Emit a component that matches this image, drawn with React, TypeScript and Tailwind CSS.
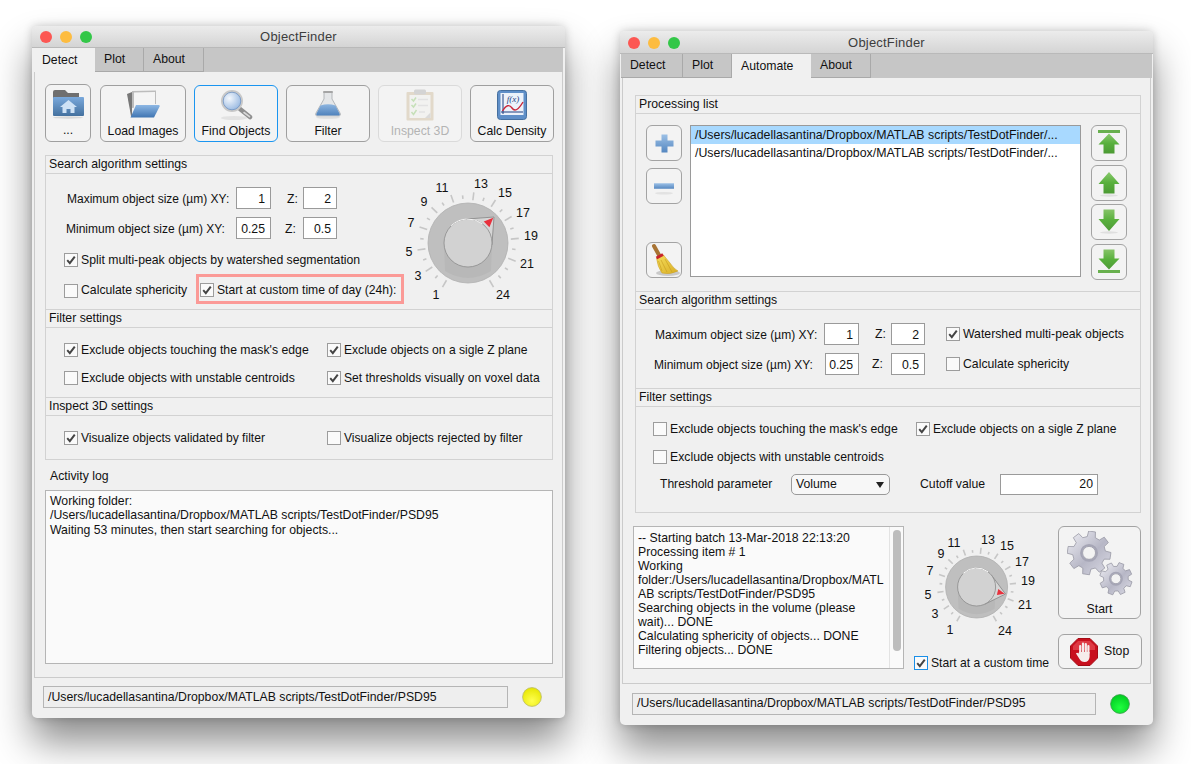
import React from "react";

const PATH = "/Users/lucadellasantina/Dropbox/MATLAB scripts/TestDotFinder/PSD95";

function Tick() {
  return (
    <svg viewBox="0 0 14 14" className="block h-full w-full">
      <path d="M2.6 7.2 L5.6 10.6 L11.4 3" fill="none" stroke="#444" strokeWidth="2.3" />
    </svg>
  );
}

function Check({ on, label, blue }: { on?: boolean; label: string; blue?: boolean }) {
  return (
    <div className="flex items-center whitespace-nowrap">
      <div className={blue ? "h-[14px] w-[14px] shrink-0 border border-[#1a8fe8] bg-[#fafafa]" : "h-[14px] w-[14px] shrink-0 border border-[#9c9c9c] bg-[#fafafa]"}>
        {on ? <Tick /> : null}
      </div>
      <span className="ml-[3px]">{label}</span>
    </div>
  );
}

function Field({ value, cls }: { value: string; cls: string }) {
  return <div className={"flex h-[22px] shrink-0 items-center justify-end border border-[#9a9a9a] bg-white pr-[5px] pt-[2px] " + cls}>{value}</div>;
}

function Section({ title, cls, low, children }: { title: string; cls: string; low?: boolean; children: React.ReactNode }) {
  return (
    <div className={"border border-[#d2d2d2] " + cls}>
      <div className={(low ? "" : "pb-[1px] ") + "flex h-[18px] items-center border-b border-[#d2d2d2] pl-[3px]"}>{title}</div>
      {children}
    </div>
  );
}

function TitleBar({ cls, dots }: { cls: string; dots: string }) {
  return (
    <div className={"relative flex items-center rounded-t-[5px] border-b border-[#b9b9b9] bg-gradient-to-b from-[#ececec] to-[#d4d4d4] " + cls}>
      <div className={"flex " + dots}>
        <div className="h-[12px] w-[12px] rounded-full bg-[#fc5753]" />
        <div className="ml-[8px] h-[12px] w-[12px] rounded-full bg-[#fdbc40]" />
        <div className="ml-[8px] h-[12px] w-[12px] rounded-full bg-[#33c748]" />
      </div>
      <div className="absolute inset-x-0 text-center text-[13px] tracking-[0.2px] text-[#3d3d3d]">ObjectFinder</div>
    </div>
  );
}

function Tab({ label, active, cls }: { label: string; active?: boolean; cls: string }) {
  return (
    <div className={(active ? "bg-[#f0f0f0] " : "border-b border-r border-[#a9a9a9] ") + "flex h-[24px] items-center " + cls}>{label}</div>
  );
}

function polar(cx: number, cy: number, r: number, deg: number) {
  const a = ((deg - 90) * Math.PI) / 180;
  return [cx + r * Math.cos(a), cy + r * Math.sin(a)];
}

function Knob(props: {
  id: string;
  viewBox: string;
  cls: string;
  cx: number;
  cy: number;
  R: number;
  r: number;
  tip: [number, number];
  font: number;
  labels: [string, number, number][];
}) {
  const { id, cx, cy, R, r, tip } = props;
  const k = R / 40;
  const ticks = [];
  for (let i = 0; i < 24; i++) {
    const v = i + 1;
    const long = (v % 2 === 1 && v <= 21) || v === 24;
    const deg = 210 + (i * 300) / 23;
    const a = polar(cx, cy, R + (long ? 3 : 4.5) * k, deg);
    const b = polar(cx, cy, R + (long ? 11 : 8) * k, deg);
    ticks.push(<line key={i} x1={a[0]} y1={a[1]} x2={b[0]} y2={b[1]} stroke="#c6c6c6" strokeWidth="1.6" />);
  }
  const dx = tip[0] - cx;
  const dy = tip[1] - cy;
  const d = Math.hypot(dx, dy);
  const base = Math.atan2(dy, dx);
  const off = Math.acos(r / d);
  const t1 = [cx + r * Math.cos(base + off), cy + r * Math.sin(base + off)];
  const t2 = [cx + r * Math.cos(base - off), cy + r * Math.sin(base - off)];
  const ux = dx / d;
  const uy = dy / d;
  const rl = 10.5 * k;
  const rw = 4 * k;
  const rb = [tip[0] - ux * rl, tip[1] - uy * rl];
  const red = `${tip[0] - ux},${tip[1] - uy} ${rb[0] - uy * rw},${rb[1] + ux * rw} ${rb[0] + uy * rw},${rb[1] - ux * rw}`;
  return (
    <svg viewBox={props.viewBox} className={"block shrink-0 " + props.cls}>
      <defs>
        <clipPath id={id}>
          <circle cx={cx} cy={cy} r={R} />
        </clipPath>
      </defs>
      {ticks}
      <circle cx={cx} cy={cy} r={R} fill="#bfbfbf" stroke="#b0b0b0" strokeWidth="0.8" />
      <path d={`M${cx - r} ${cy} L${cx - r + 1} ${cy + R * 0.7} Q${cx} ${cy + R * 1.05} ${cx + r - 1} ${cy + R * 0.7} L${cx + r} ${cy} Z`} fill="#b8b8b8" clipPath={`url(#${id})`} />
      <polygon points={`${tip[0]},${tip[1]} ${t1[0]},${t1[1]} ${t2[0]},${t2[1]}`} fill="#d6d6d6" stroke="#858585" strokeWidth="0.8" />
      <circle cx={cx} cy={cy} r={r} fill="#d2d2d2" stroke="#8c8c8c" strokeWidth="0.8" />
      <path d={`M${cx - r * 0.7} ${cy - r * 0.72} A${r} ${r} 0 0 1 ${cx + r * 0.6} ${cy - r * 0.8}`} fill="none" stroke="#f6f6f6" strokeWidth="1" />
      <polygon points={red} fill="#e8303c" />
      {props.labels.map(([t, x, y]) => (
        <text key={t} x={x} y={y} textAnchor="middle" dominantBaseline="central" fontSize={props.font} fill="#111" fontFamily="Liberation Sans, Arial, sans-serif">
          {t}
        </text>
      ))}
    </svg>
  );
}

function FolderHome() {
  return (
    <svg viewBox="0 0 32 30" className="h-[30px] w-[32px]">
      <defs>
        <linearGradient id="fh" x1="0" x2="0" y1="0" y2="1">
          <stop offset="0" stopColor="#7aa9dc" />
          <stop offset="1" stopColor="#44719f" />
        </linearGradient>
      </defs>
      <path d="M1 3 Q1 1 3 1 H13 L16 4 H27 V10 H1 Z" fill="#6f6f6f" />
      <rect x="1" y="8" width="31" height="19" rx="1" fill="url(#fh)" />
      <path d="M16.5 11 L25 18 H22.5 V24 H18.5 V20 H14.5 V24 H10.5 V18 H8 Z" fill="#cfe2f5" />
      <ellipse cx="16" cy="28.5" rx="15" ry="1.2" fill="#d8d8d8" />
    </svg>
  );
}

function OpenFolder() {
  return (
    <svg viewBox="0 0 34 30" className="h-[30px] w-[34px]">
      <defs>
        <linearGradient id="ofb" x1="0" x2="0" y1="0" y2="1">
          <stop offset="0" stopColor="#8db7e4" />
          <stop offset="1" stopColor="#3f75b2" />
        </linearGradient>
      </defs>
      <path d="M1 4 L6 2 V26 H5 Z" fill="#777" />
      <path d="M6 1 L30 0.5 V14 L6 18 Z" fill="#bcbcbc" />
      <path d="M8 2.5 L29 2 V15 L8 18 Z" fill="#f4f4f4" />
      <path d="M10 15 H33 Q34 15 33.6 16.5 L28 27.5 H4.5 Z" fill="url(#ofb)" />
    </svg>
  );
}

function Magnifier() {
  return (
    <svg viewBox="0 0 34 32" className="h-[32px] w-[34px]">
      <defs>
        <radialGradient id="mg" cx="0.35" cy="0.35" r="0.8">
          <stop offset="0" stopColor="#f4f8fd" />
          <stop offset="1" stopColor="#8fb2de" />
        </radialGradient>
      </defs>
      <ellipse cx="15" cy="29" rx="13" ry="2" fill="#e2e2e2" />
      <line x1="21" y1="20" x2="31" y2="28" stroke="#8f8f8f" strokeWidth="4.5" strokeLinecap="round" />
      <line x1="25" y1="23.5" x2="30.5" y2="27.7" stroke="#d9d9d9" strokeWidth="1.6" strokeLinecap="round" />
      <circle cx="13" cy="12" r="11" fill="#c8c8c8" />
      <circle cx="13" cy="12" r="8.8" fill="url(#mg)" stroke="#6f93c4" strokeWidth="0.8" />
    </svg>
  );
}

function Flask() {
  return (
    <svg viewBox="0 0 28 29" className="h-[29px] w-[28px]">
      <defs>
        <linearGradient id="fl" x1="0" x2="0" y1="0" y2="1">
          <stop offset="0" stopColor="#8db5e0" />
          <stop offset="1" stopColor="#4f82bc" />
        </linearGradient>
      </defs>
      <path d="M10 2 H18 V9 L26 23 Q27.5 26 24 26 H4 Q0.5 26 2 23 L10 9 Z" fill="#e4e6e8" stroke="#a4a8ac" strokeWidth="0.8" />
      <rect x="9" y="1" width="10" height="2" rx="1" fill="#a5a5a5" />
      <path d="M6.5 15.5 Q14 13 21.5 15.5 L25.5 23.5 Q26.5 25.5 24 25.5 H4 Q1.5 25.5 2.5 23.5 Z" fill="url(#fl)" />
      <ellipse cx="14" cy="27.6" rx="12" ry="1.2" fill="#dedede" />
    </svg>
  );
}

function Clipboard() {
  return (
    <svg viewBox="0 0 28 32" className="h-[32px] w-[28px]">
      <rect x="0.5" y="3" width="27" height="28.5" rx="1" fill="#dccfb9" />
      <rect x="3.5" y="6" width="21" height="23" fill="#f2f2f0" />
      <path d="M19 29 L24.5 23.5 V29 Z" fill="#d0d0d0" />
      <rect x="8" y="0.5" width="12" height="5" rx="1.5" fill="#c8c8c8" />
      <path d="M5.5 10 L7.5 12 L10 8.5 M5.5 16 L7.5 18 L10 14.5 M5.5 23 L7.5 25.5 L10.5 21" fill="none" stroke="#b3d9a0" strokeWidth="1.5" />
      <path d="M12 10.5 H22 M12 16.5 H22 M13 23 H19" stroke="#dcdcdc" strokeWidth="1.4" />
    </svg>
  );
}

function FxGraph() {
  return (
    <svg viewBox="0 0 30 30" className="h-[30px] w-[30px]">
      <rect x="0.5" y="0.5" width="29" height="29" rx="3" fill="#5f8fc8" stroke="#456f9f" />
      <rect x="3.5" y="3" width="23" height="22" fill="#ecf2fa" />
      <path d="M6 24 V4 M4 22 H26" stroke="#1d3f80" strokeWidth="1" fill="none" />
      <path d="M5.5 21 Q11 12 15 18 T26 12" fill="none" stroke="#c9283a" strokeWidth="1.4" />
      <text x="16" y="12" textAnchor="middle" fontSize="9" fontStyle="italic" fill="#1d3f80" fontFamily="Liberation Serif, serif">f(x)</text>
    </svg>
  );
}

function PlusIcon() {
  return (
    <svg viewBox="0 0 19 19" className="h-[19px] w-[19px]">
      <defs>
        <linearGradient id="pl" x1="0" x2="0" y1="0" y2="1">
          <stop offset="0" stopColor="#9cc0e6" />
          <stop offset="1" stopColor="#5587c0" />
        </linearGradient>
      </defs>
      <path d="M6.5 0.5 H12.5 V6.5 H18.5 V12.5 H12.5 V18.5 H6.5 V12.5 H0.5 V6.5 H6.5 Z" fill="url(#pl)" />
    </svg>
  );
}

function MinusIcon() {
  return (
    <svg viewBox="0 -6.25 22 20" className="h-[20px] w-[22px]">
      <defs>
        <linearGradient id="mi" x1="0" x2="0" y1="0" y2="1">
          <stop offset="0" stopColor="#9cc0e6" />
          <stop offset="1" stopColor="#5587c0" />
        </linearGradient>
      </defs>
      <rect x="1" y="1" width="20" height="5.5" fill="url(#mi)" />
      <ellipse cx="11" cy="11" rx="9" ry="1.3" fill="#e2e2e2" />
    </svg>
  );
}

function Broom() {
  return (
    <svg viewBox="0 0 32 34" className="h-[34px] w-[32px]">
      <defs>
        <linearGradient id="br" x1="0" x2="1" y1="0" y2="1">
          <stop offset="0" stopColor="#f5dd5c" />
          <stop offset="1" stopColor="#d9ae24" />
        </linearGradient>
      </defs>
      <ellipse cx="20" cy="30" rx="12" ry="3" fill="#c9c9c9" />
      <line x1="6" y1="3" x2="11" y2="12" stroke="#a87434" strokeWidth="4" strokeLinecap="round" />
      <path d="M8.5 15 L15 11.5 L22 20 Q26 26 30 28 Q22 32 14 30 Q9.5 24 8.5 15 Z" fill="url(#br)" stroke="#c69a1e" strokeWidth="0.5" />
      <line x1="8.5" y1="15" x2="15" y2="11.5" stroke="#c8232c" strokeWidth="3" />
      <path d="M13 17 L19 29 M17 16 L24 29 M10.5 18 L14 28" stroke="#c69a1e" strokeWidth="0.6" />
    </svg>
  );
}

function GreenArrow({ id, kind }: { id: string; kind: "top" | "up" | "down" | "bottom" }) {
  const up = kind === "top" || kind === "up";
  const bar = kind === "top" || kind === "bottom";
  return (
    <svg viewBox="0 0 24 28" className="h-[28px] w-[24px]">
      <defs>
        <linearGradient id={id} x1="0" x2="0" y1="0" y2="1">
          <stop offset="0" stopColor={up ? "#8ac96e" : "#4f9a38"} />
          <stop offset="0.5" stopColor="#58b03c" />
          <stop offset="1" stopColor={up ? "#4c9a34" : "#86c468"} />
        </linearGradient>
      </defs>
      <ellipse cx="12" cy={up ? 26.5 : 24.5} rx="9" ry="1.2" fill={bar ? "transparent" : "#dfdfdf"} />
      <g transform={up ? undefined : "matrix(1 0 0 -1 0 26)"}>
        {bar ? <rect x="1" y="1" width="22" height="3" fill="#68b04e" /> : null}
        <path d={bar ? "M12 4.5 L22.5 15.5 H17.5 V24.5 H6.5 V15.5 H1.5 Z" : "M12 3 L22.5 15 H17.5 V24.5 H6.5 V15 H1.5 Z"} fill={`url(#${id})`} />
      </g>
    </svg>
  );
}

function gearPath(cx: number, cy: number, ro: number, ri: number, hole: number, n: number, rot: number) {
  let d = "";
  const step = 360 / n;
  for (let i = 0; i < n; i++) {
    const s = rot + i * step;
    const pts = [
      polar(cx, cy, ri, s - step * 0.32),
      polar(cx, cy, ro, s - step * 0.2),
      polar(cx, cy, ro, s + step * 0.2),
      polar(cx, cy, ri, s + step * 0.32),
    ];
    pts.forEach((p, j) => {
      d += (i === 0 && j === 0 ? "M" : "L") + p[0].toFixed(2) + " " + p[1].toFixed(2) + " ";
    });
  }
  d += "Z ";
  d += `M${cx + hole} ${cy} A${hole} ${hole} 0 1 0 ${cx - hole} ${cy} A${hole} ${hole} 0 1 0 ${cx + hole} ${cy} Z`;
  return d;
}

function Gears() {
  return (
    <svg viewBox="0 0 66 66" className="h-[66px] w-[66px]">
      <defs>
        <linearGradient id="ge" x1="0" x2="1" y1="0" y2="1">
          <stop offset="0" stopColor="#f1f1f6" />
          <stop offset="0.55" stopColor="#b7b7c6" />
          <stop offset="1" stopColor="#dcdce6" />
        </linearGradient>
      </defs>
      <path d={gearPath(22, 22, 22, 16.5, 6.5, 8, 8)} fill="url(#ge)" fillRule="evenodd" stroke="#8e8e9c" strokeWidth="0.7" />
      <circle cx="22" cy="22" r="8" fill="none" stroke="#a5a5b5" strokeWidth="2" />
      <path d={gearPath(49, 48, 16.5, 12.5, 5, 8, 20)} fill="url(#ge)" fillRule="evenodd" stroke="#8e8e9c" strokeWidth="0.7" />
      <circle cx="49" cy="48" r="6.2" fill="none" stroke="#a5a5b5" strokeWidth="1.6" />
    </svg>
  );
}

function StopHand() {
  return (
    <svg viewBox="0 0 28 28" className="h-[28px] w-[28px]">
      <path d="M8 0.5 H20 L27.5 8 V20 L20 27.5 H8 L0.5 20 V8 Z" fill="#c8101e" stroke="#a40c16" />
      <path d="M8 3 H20 L25 8 V12 H3 V8 Z" fill="#de3a44" />
      <path d="M10.2 15 V8 M13 14 V5.5 M15.8 14 V6 M18.4 15 V8" stroke="#f6ecec" strokeWidth="2.2" strokeLinecap="round" fill="none" />
      <path d="M9 14 H19.6 V19 Q19 24 14.5 24 Q11 24 9.5 21 L6 15.5 Q7 14 8.5 15.5 Z" fill="#f6ecec" />
    </svg>
  );
}

function Led({ id, c1, c2, edge, cls }: { id: string; c1: string; c2: string; edge: string; cls: string }) {
  return (
    <svg viewBox="0 0 20 20" className={"shrink-0 " + cls}>
      <defs>
        <radialGradient id={id} cx="0.5" cy="0.7" r="0.7">
          <stop offset="0" stopColor={c1} />
          <stop offset="1" stopColor={c2} />
        </radialGradient>
      </defs>
      <circle cx="10" cy="10" r="9.4" fill={`url(#${id})`} stroke={edge} strokeWidth="0.8" />
    </svg>
  );
}

function ToolButton({ label, cls, disabled, focus, children }: { label: string; cls: string; disabled?: boolean; focus?: boolean; children: React.ReactNode }) {
  const border = disabled ? "border-[#dadada] text-[#b4b4b4]" : focus ? "border-[#1a95f0]" : "border-[#9f9f9f]";
  return (
    <div className={"flex shrink-0 flex-col items-center rounded-[6px] border bg-[#f3f3f3] " + border + " " + cls}>
      <div className="flex h-[37px] items-center justify-center">{children}</div>
      <div className="leading-[16px]">{label}</div>
    </div>
  );
}

function SquareButton({ cls, children }: { cls?: string; children: React.ReactNode }) {
  return <div className={"flex h-[36px] w-[36px] shrink-0 items-center justify-center rounded-[6px] border border-[#a3a3a3] bg-[#f3f3f3] " + (cls || "")}>{children}</div>;
}

function DetectWindow() {
  return (
    <div className="flex h-[692px] w-[533px] shrink-0 flex-col rounded-[5px] bg-[#f0f0f0] shadow-[0_24px_38px_rgba(0,0,0,0.45),0_0_10px_rgba(0,0,0,0.2)]">
      <TitleBar cls="h-[22px]" dots="ml-[8px]" />
      <div className="mx-[2px] flex h-[24px] bg-[#c6c6c6]">
        <Tab label="Detect" active cls="w-[61px] pl-[8px]" />
        <Tab label="Plot" cls="w-[49px] pl-[9px]" />
        <Tab label="About" cls="w-[60px] pl-[9px]" />
        <div className="flex-1 border-b border-[#c6c6c6]" />
      </div>
      <div className="mx-[2px] h-[606px] border-x border-b border-[#cbcbcb] pl-[10px] pr-[9px] pt-[13px]">
        <div className="flex h-[57px] items-stretch">
          <ToolButton label="..." cls="-mt-px w-[46px]"><FolderHome /></ToolButton>
          <ToolButton label="Load Images" cls="ml-[9px] w-[86px]"><OpenFolder /></ToolButton>
          <ToolButton label="Find Objects" focus cls="ml-[8px] w-[84px]"><Magnifier /></ToolButton>
          <ToolButton label="Filter" cls="ml-[8px] w-[84px]"><Flask /></ToolButton>
          <ToolButton label="Inspect 3D" disabled cls="ml-[8px] w-[84px]"><div className="opacity-70"><Clipboard /></div></ToolButton>
          <ToolButton label="Calc Density" cls="ml-[8px] w-[84px]"><FxGraph /></ToolButton>
        </div>
        <Section title="Search algorithm settings" low cls="mt-[13px] h-[155px]">
          <div className="flex">
            <div className="w-[359px] pt-[13px]">
              <div className="flex h-[22px] items-center">
                <span className="ml-[21px] w-[169px] whitespace-nowrap pt-[2px] text-[12px]">Maximum object size (µm) XY:</span>
                <Field value="1" cls="w-[35px]" />
                <span className="ml-[16px] w-[16px] pt-[2px]">Z:</span>
                <Field value="2" cls="w-[34px]" />
              </div>
              <div className="mt-[8px] flex h-[22px] items-center">
                <span className="ml-[20px] w-[170px] whitespace-nowrap pt-[2px] text-[12px]">Minimum object size (µm) XY:</span>
                <Field value="0.25" cls="w-[35px]" />
                <span className="ml-[14px] w-[18px] pt-[2px]">Z:</span>
                <Field value="0.5" cls="w-[34px]" />
              </div>
              <div className="ml-[18px] mt-[11px] flex h-[20px] items-center">
                <Check on label="Split multi-peak objects by watershed segmentation" />
              </div>
              <div className="mt-[4px] flex h-[30px] items-center">
                <div className="ml-[18px] w-[132px] pt-[3px]">
                  <Check label="Calculate sphericity" />
                </div>
                <div className="flex h-[30px] w-[208px] items-center border-[3px] border-[#fb9a97] pl-[1px] pt-[3px] text-[12.15px]">
                  <Check on label="Start at custom time of day (24h):" />
                </div>
              </div>
            </div>
            <Knob
              id="k1"
              viewBox="405 175 145 130"
              cls="h-[130px] w-[145px]"
              cx={468}
              cy={244}
              R={40}
              r={24}
              tip={[494, 218]}
              font={12.5}
              labels={[["1", 436, 296], ["3", 418, 277], ["5", 409, 253], ["7", 411, 224], ["9", 424, 203], ["11", 442, 189], ["13", 481, 185], ["15", 505, 194], ["17", 523, 214], ["19", 531, 237], ["21", 527, 265], ["24", 503, 296]]}
            />
          </div>
        </Section>
        <Section title="Filter settings" cls="-mt-px h-[89px]">
          <div className="pl-[18px] pt-[12px]">
            <div className="flex h-[20px] items-center">
              <div className="w-[263px]"><Check on label="Exclude objects touching the mask's edge" /></div>
              <div className="text-[12.1px]"><Check on label="Exclude objects on a sigle Z plane" /></div>
            </div>
            <div className="mt-[8px] flex h-[20px] items-center">
              <div className="w-[263px]"><Check label="Exclude objects with unstable centroids" /></div>
              <div className="text-[12.1px]"><Check on label="Set thresholds visually on voxel data" /></div>
            </div>
          </div>
        </Section>
        <Section title="Inspect 3D settings" cls="-mt-px h-[63px]">
          <div className="mt-[12px] flex h-[20px] items-center pl-[18px]">
            <div className="w-[263px] text-[12.1px]"><Check on label="Visualize objects validated by filter" /></div>
            <div className="text-[12.1px]"><Check label="Visualize objects rejected by filter" /></div>
          </div>
        </Section>
        <div className="flex h-[30px] items-center pl-[5px] pt-[3px]">Activity log</div>
        <div className="h-[174px] border border-[#b5b5b5] bg-[#fafafa] pl-[4px] pt-[3px] leading-[14.4px]">
          <div>Working folder:</div>
          <div>{PATH}</div>
          <div>Waiting 53 minutes, then start searching for objects...</div>
        </div>
      </div>
      <div className="flex h-[40px] items-center pb-[2px] pl-[11px]">
        <div className="flex h-[22px] w-[465px] items-center border border-[#b5b5b5] bg-[#eeeeee] pl-[4px]">{PATH}</div>
        <Led id="led1" c1="#ffff50" c2="#e6e600" edge="#b9b96a" cls="ml-[14px] h-[20px] w-[20px]" />
      </div>
    </div>
  );
}

function AutomateWindow() {
  return (
    <div className="mt-[5px] flex h-[694px] w-[533px] shrink-0 flex-col rounded-[5px] bg-[#f0f0f0] shadow-[0_24px_38px_rgba(0,0,0,0.45),0_0_10px_rgba(0,0,0,0.2)]">
      <TitleBar cls="h-[23px] pt-[2px]" dots="ml-[8px]" />
      <div className="mx-[1px] flex h-[24px] bg-[#c6c6c6]">
        <Tab label="Detect" cls="w-[62px] pl-[9px]" />
        <Tab label="Plot" cls="w-[49px] pl-[9px]" />
        <Tab label="Automate" active cls="w-[79px] pl-[9px]" />
        <Tab label="About" cls="w-[60px] pl-[9px]" />
        <div className="flex-1 border-b border-[#c6c6c6]" />
      </div>
      <div className="mx-[2px] h-[606px] border-x border-b border-[#cbcbcb] pt-[17px]">
        <div className="ml-[12px] w-[506px]">
          <Section title="Processing list" low cls="h-[197px]">
            <div className="flex pl-[10px] pt-[11px]">
              <div className="flex h-[153px] w-[36px] flex-col">
                <SquareButton><PlusIcon /></SquareButton>
                <SquareButton cls="mt-[7px]"><MinusIcon /></SquareButton>
                <SquareButton cls="mt-[38px]"><Broom /></SquareButton>
              </div>
              <div className="ml-[8px] h-[152px] w-[391px] border border-[#9a9a9a] bg-white text-[12.35px]">
                <div className="flex h-[18px] items-center bg-[#a8d9ff] pl-[4px]">/Users/lucadellasantina/Dropbox/MATLAB scripts/TestDotFinder/...</div>
                <div className="flex h-[18px] items-center pl-[4px]">/Users/lucadellasantina/Dropbox/MATLAB scripts/TestDotFinder/...</div>
              </div>
              <div className="ml-[10px] flex flex-col gap-[3.5px]">
                <SquareButton><GreenArrow id="g1" kind="top" /></SquareButton>
                <SquareButton><GreenArrow id="g2" kind="up" /></SquareButton>
                <SquareButton><GreenArrow id="g3" kind="down" /></SquareButton>
                <SquareButton><GreenArrow id="g4" kind="bottom" /></SquareButton>
              </div>
            </div>
          </Section>
          <Section title="Search algorithm settings" cls="-mt-px h-[98px]">
            <div className="pt-[13px]">
              <div className="flex h-[22px] items-center">
                <span className="ml-[19px] w-[169px] whitespace-nowrap pt-[1px] text-[12px]">Maximum object size (µm) XY:</span>
                <Field value="1" cls="w-[35px]" />
                <span className="ml-[16px] w-[16px] pt-[1px]">Z:</span>
                <Field value="2" cls="w-[34px]" />
                <div className="ml-[21px]"><Check on label="Watershed multi-peak objects" /></div>
              </div>
              <div className="mt-[8px] flex h-[22px] items-center">
                <span className="ml-[18px] w-[171px] whitespace-nowrap pt-[1px] text-[12px]">Minimum object size (µm) XY:</span>
                <Field value="0.25" cls="w-[34px]" />
                <span className="ml-[13px] w-[19px] pt-[1px]">Z:</span>
                <Field value="0.5" cls="w-[34px]" />
                <div className="ml-[21px]"><Check label="Calculate sphericity" /></div>
              </div>
            </div>
          </Section>
          <Section title="Filter settings" cls="-mt-px h-[125px]">
            <div className="pl-[17px] pt-[12px]">
              <div className="flex h-[20px] items-center">
                <div className="w-[263px]"><Check label="Exclude objects touching the mask's edge" /></div>
                <div className="text-[12.1px]"><Check on label="Exclude objects on a sigle Z plane" /></div>
              </div>
              <div className="mt-[8px] flex h-[20px] items-center">
                <Check label="Exclude objects with unstable centroids" />
              </div>
              <div className="mt-[7px] flex h-[21px] items-center">
                <span className="ml-[7px] w-[131px] text-[12.1px]">Threshold parameter</span>
                <div className="flex h-[21px] w-[99px] items-center justify-between rounded-[5px] border border-[#9a9a9a] bg-[#f7f7f7] pl-[4px] pr-[5px]">
                  <span>Volume</span>
                  <svg viewBox="0 0 8 6" className="h-[6px] w-[8px]"><path d="M0 0 H8 L4 6 Z" fill="#222" /></svg>
                </div>
                <span className="ml-[30px] w-[80px]">Cutoff value</span>
                <div className="flex h-[21px] w-[98px] items-center justify-end border border-[#9a9a9a] bg-white pr-[4px]">20</div>
              </div>
            </div>
          </Section>
        </div>
        <div className="ml-[10px] mt-[13px] flex h-[143px]">
          <div className="flex w-[271px] shrink-0 border border-[#b5b5b5] bg-[#fafafa]">
            <div className="w-[255px] pl-[4px] pt-[4px] leading-[14px]">
              <div>-- Starting batch 13-Mar-2018 22:13:20</div>
              <div>Processing item # 1</div>
              <div>Working</div>
              <div className="whitespace-nowrap">folder:/Users/lucadellasantina/Dropbox/MATL</div>
              <div>AB scripts/TestDotFinder/PSD95</div>
              <div>Searching objects in the volume (please</div>
              <div>wait)... DONE</div>
              <div>Calculating sphericity of objects... DONE</div>
              <div>Filtering objects... DONE</div>
            </div>
            <div className="w-[14px] border-l border-[#e3e3e3] pl-[3px] pt-[3px]">
              <div className="h-[121px] w-[8px] rounded-[4px] bg-[#bdbdbd]" />
            </div>
          </div>
          <div className="w-[154px] shrink-0">
            <Knob
              id="k2"
              viewBox="905 526 153 126"
              cls="h-[126px] w-[153px]"
              cx={977.6}
              cy={587}
              R={31}
              r={19}
              tip={[1006.5, 594]}
              font={12.5}
              labels={[["1", 951, 630], ["3", 936, 614], ["5", 929, 595], ["7", 931, 571], ["9", 942, 554], ["11", 955, 543], ["13", 989, 540], ["15", 1008, 546], ["17", 1023, 562], ["19", 1029, 581], ["21", 1026, 605], ["24", 1006, 631]]}
            />
            <div className="ml-[10px] mt-[2px] text-[12.15px]"><Check on blue label="Start at a custom time" /></div>
          </div>
          <div className="w-[84px] shrink-0">
            <div className="flex h-[93px] w-[83px] flex-col items-center rounded-[6px] border border-[#a3a3a3] bg-[#f3f3f3] pt-[4px]">
              <Gears />
              <div className="mt-[3px]">Start</div>
            </div>
            <div className="mt-[15px] flex h-[35px] items-center rounded-[6px] border border-[#a3a3a3] bg-[#f3f3f3] pl-[11px]">
              <StopHand />
              <span className="ml-[6px]">Stop</span>
            </div>
          </div>
        </div>
      </div>
      <div className="flex h-[41px] items-center pb-[2px] pl-[12px]">
        <div className="flex h-[22px] w-[464px] items-center border border-[#b5b5b5] bg-[#eeeeee] pl-[4px]">{PATH}</div>
        <Led id="led2" c1="#20ff40" c2="#00cc20" edge="#3a9a4a" cls="ml-[14px] h-[20px] w-[20px]" />
      </div>
    </div>
  );
}

export default function App() {
  return (
    <div className="flex h-[764px] w-[1191px] items-start gap-[55px] overflow-hidden bg-white pl-[32px] pt-[26px] font-['Liberation_Sans',Arial,sans-serif] text-[12.25px] text-[#111]">
      <DetectWindow />
      <AutomateWindow />
    </div>
  );
}
